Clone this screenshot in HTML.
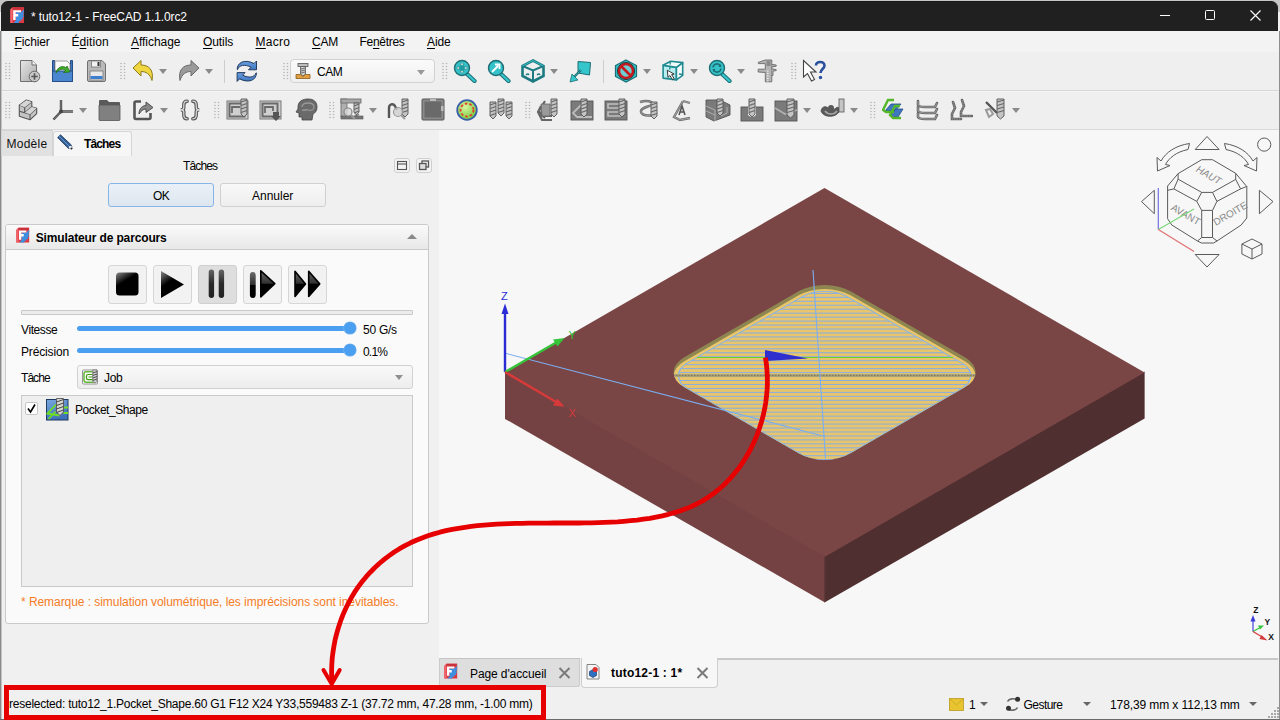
<!DOCTYPE html>
<html><head><meta charset="utf-8">
<style>
*{margin:0;padding:0;box-sizing:border-box}
html,body{width:1280px;height:720px;overflow:hidden;background:#f0f0f0;font-family:"Liberation Sans",sans-serif;font-size:12px;color:#000}
.a{position:absolute}
.t{position:absolute;white-space:nowrap;line-height:1}
#title{left:1px;top:1px;width:1277px;height:30px;background:#202020;border-top:1px solid #191919;border-radius:7px 7px 0 0}
#menu{left:0;top:31px;width:1280px;height:21px;background:#f3f3f3}
#tb{left:0;top:52px;width:1280px;height:78px;background:#efefef}
.grip{position:absolute;width:6px;height:17px;background-image:radial-gradient(circle,#a8a8a8 0.8px,transparent 1px);background-size:3px 4px}
.dd{position:absolute;width:0;height:0;border-left:4.5px solid transparent;border-right:4.5px solid transparent;border-top:5px solid #8a8a8a}
.ul{text-decoration:underline;text-underline-offset:2px}
</style></head><body>
<!-- window frame -->
<div class="a" style="left:0;top:0;width:1280px;height:12px;background:#c6c6c6"></div>
<div class="a" id="title"></div>
<div class="a" id="menu"></div>
<div class="a" id="tb"></div>
<div class="a" style="left:0;top:90px;width:1280px;height:1px;background:#d6d6d6"></div><div class="a" style="left:0;top:91px;width:1280px;height:1px;background:#f4f4f4"></div>
<div class="a" style="left:0;top:129px;width:1280px;height:1px;background:#d9d9d9"></div>
<div class="a" style="left:0;top:31px;width:1px;height:689px;background:#8a8a8a"></div><div class="a" style="left:1px;top:31px;width:1px;height:689px;background:#c4c4c4"></div>


<!-- title content -->
<svg class="a" style="left:10px;top:7px" width="17" height="17" viewBox="0 0 17 17">
<path d="M0.3 2.6 L2.6 0.3 H14 V16 H0.3 Z" fill="#dc3a42"/>
<path d="M0.3 2.6 L2.6 0.3 V16 H0.3 Z" fill="#f0646a"/>
<path d="M2.6 0.3 H14 L12 2.6 H2.6 Z" fill="#c8323a"/>
<path d="M14 2.4 V5 L13.2 5.6 L14 7 L13 8 L14 9.6 L12.6 10.4 L13 12 L11.2 12.4 L10.6 14 L9.2 14 L8.6 16 H3.8 L6 13 V5.3 H11 Z" fill="#3f8fe0"/>
<path d="M3.2 3.2 H11 V5.3 H5.6 V7 H8.2 V9.6 H5.6 V13 H3.2 Z" fill="#fff"/>
</svg>
<div class="t" style="left:31px;top:10.7px;font-size:12px;color:#fff;letter-spacing:-0.12px">* tuto12-1 - FreeCAD 1.1.0rc2</div>
<div class="a" style="left:1160px;top:15px;width:10px;height:1px;background:#fff"></div>
<div class="a" style="left:1205px;top:10px;width:10px;height:10px;border:1px solid #fff;border-radius:1.5px"></div>
<svg class="a" style="left:1250px;top:10px" width="11" height="11" viewBox="0 0 11 11"><path d="M0.5 0.5 L10.5 10.5 M10.5 0.5 L0.5 10.5" stroke="#fff" stroke-width="1.1"/></svg>
<!-- menu -->
<div class="t" style="left:14.5px;top:36px;font-size:12px;letter-spacing:-0.117px"><span class="ul">F</span>ichier</div>
<div class="t" style="left:71.5px;top:36px;font-size:12px;letter-spacing:0.067px">É<span class="ul">d</span>ition</div>
<div class="t" style="left:131px;top:36px;font-size:12px;letter-spacing:-0.037px"><span class="ul">A</span>ffichage</div>
<div class="t" style="left:203px;top:36px;font-size:12px;letter-spacing:-0.08px"><span class="ul">O</span>utils</div>
<div class="t" style="left:255.5px;top:36px;font-size:12px;letter-spacing:0.25px"><span class="ul">M</span>acro</div>
<div class="t" style="left:312px;top:36px;font-size:12px;letter-spacing:-0.25px"><span class="ul">C</span>AM</div>
<div class="t" style="left:359.5px;top:36px;font-size:12px;letter-spacing:-0.286px">Fe<span class="ul">n</span>êtres</div>
<div class="t" style="left:427px;top:36px;font-size:12px;letter-spacing:-0.1px"><span class="ul">A</span>ide</div>


<!-- toolbar row 1 -->
<svg class="a" style="left:5.0px;top:62.0px" width="6" height="18" fill="#b4b4b4"><rect x="0.30000000000000004" y="0.9" width="1.4" height="1.2"/><rect x="3.8" y="0.9" width="1.4" height="1.2"/><rect x="0.30000000000000004" y="3.9" width="1.4" height="1.2"/><rect x="3.8" y="3.9" width="1.4" height="1.2"/><rect x="0.30000000000000004" y="6.9" width="1.4" height="1.2"/><rect x="3.8" y="6.9" width="1.4" height="1.2"/><rect x="0.30000000000000004" y="9.9" width="1.4" height="1.2"/><rect x="3.8" y="9.9" width="1.4" height="1.2"/><rect x="0.30000000000000004" y="12.9" width="1.4" height="1.2"/><rect x="3.8" y="12.9" width="1.4" height="1.2"/><rect x="0.30000000000000004" y="15.9" width="1.4" height="1.2"/><rect x="3.8" y="15.9" width="1.4" height="1.2"/></svg>
<svg class="a" style="left:19px;top:59px" width="22" height="24" viewBox="0 0 22 24">
<defs><linearGradient id="gpg" x1="0" y1="0" x2="1" y2="1"><stop offset="0" stop-color="#e6e6e6"/><stop offset="1" stop-color="#a9a9a9"/></linearGradient></defs>
<path d="M1.5 1.5 H13 L17.5 6 V22.5 H1.5 Z" fill="url(#gpg)" stroke="#6f6f6f"/>
<path d="M13 1.5 V6 H17.5" fill="#f4f4f4" stroke="#6f6f6f"/>
<circle cx="15.5" cy="17.5" r="5.3" fill="#c8c8c8" stroke="#6a6a6a"/>
<path d="M15.5 14.3 V20.7 M12.3 17.5 H18.7" stroke="#555" stroke-width="1.6"/>
</svg>
<svg class="a" style="left:51px;top:59px" width="23" height="24" viewBox="0 0 23 24">
<path d="M1.5 1.5 H3.5 V11 H19.5 V1.5 H21.5 V22.5 H1.5 Z" fill="#3e76c0" stroke="#234e86"/>
<path d="M4 2 H16 L19 5 V13 H4 Z" fill="#fafafa" stroke="#888" stroke-width="0.8"/>
<path d="M1.5 12 H21.5 V22.5 H1.5 Z" fill="#4a86cf" stroke="#234e86"/>
<path d="M5 14 C6 8 12 6 15 9 L16 7 L19 13 L12.5 13.5 L14.5 11.5 C12 9.5 8 10 5 14 Z" fill="#3fae2a" stroke="#256d18" stroke-width="0.8"/>
</svg>
<svg class="a" style="left:86px;top:59px" width="21" height="24" viewBox="0 0 21 24">
<path d="M1.5 3 Q1.5 1.5 3 1.5 H16 L19.5 5 V21 Q19.5 22.5 18 22.5 H3 Q1.5 22.5 1.5 21 Z" fill="#b9b9b9" stroke="#707070"/>
<rect x="5.5" y="2" width="9" height="6" fill="#f2f2f2" stroke="#777" stroke-width="0.8"/>
<rect x="11.5" y="3" width="2" height="4" fill="#333"/>
<rect x="4" y="12" width="13" height="9" fill="#e8e8e8" stroke="#777" stroke-width="0.8"/>
<rect x="4.5" y="17" width="12" height="3" fill="#3f7fd0"/>
</svg>
<svg class="a" style="left:120.0px;top:62.0px" width="6" height="18" fill="#b4b4b4"><rect x="0.30000000000000004" y="0.9" width="1.4" height="1.2"/><rect x="3.8" y="0.9" width="1.4" height="1.2"/><rect x="0.30000000000000004" y="3.9" width="1.4" height="1.2"/><rect x="3.8" y="3.9" width="1.4" height="1.2"/><rect x="0.30000000000000004" y="6.9" width="1.4" height="1.2"/><rect x="3.8" y="6.9" width="1.4" height="1.2"/><rect x="0.30000000000000004" y="9.9" width="1.4" height="1.2"/><rect x="3.8" y="9.9" width="1.4" height="1.2"/><rect x="0.30000000000000004" y="12.9" width="1.4" height="1.2"/><rect x="3.8" y="12.9" width="1.4" height="1.2"/><rect x="0.30000000000000004" y="15.9" width="1.4" height="1.2"/><rect x="3.8" y="15.9" width="1.4" height="1.2"/></svg>
<svg class="a" style="left:132px;top:59px" width="23" height="23" viewBox="0 0 23 23">
<path d="M1 9 L9 1.5 L9 6 C17 6 22 11 20 21.5 C18 15 14 12.5 9 12.5 L9 17 Z" fill="#f0d640" stroke="#8a7a1a" stroke-width="1"/>
</svg>
<div class="dd" style="left:159px;top:69px"></div>
<svg class="a" style="left:177px;top:59px" width="23" height="23" viewBox="0 0 23 23">
<path d="M22 9 L14 1.5 L14 6 C6 6 1 11 3 21.5 C5 15 9 12.5 14 12.5 L14 17 Z" fill="#9a9a9a" stroke="#6a6a6a" stroke-width="1"/>
</svg>
<div class="dd" style="left:205px;top:69px"></div>
<div class="a" style="left:224px;top:60px;width:1px;height:23px;background:#cdcdcd"></div>
<svg class="a" style="left:228px;top:54px" width="36" height="34" viewBox="0 0 36 34">
<defs><linearGradient id="grf" x1="0" y1="0" x2="0" y2="1"><stop offset="0" stop-color="#6a9ee0"/><stop offset="1" stop-color="#3f78c0"/></linearGradient></defs>
<path d="M9.2 15.5 C9 9 16 4.5 26 9.5 L28.5 7 V15.8 H20.5 L23 13.3 C17 10 11 11 9.6 15.5 Z" fill="url(#grf)" stroke="#1a3050" stroke-width="0.9" stroke-linejoin="round"/>
<path d="M28.4 18.9 C28.6 25.4 21.6 29.9 11.6 24.9 L9.1 27.4 V18.6 H17.1 L14.6 21.1 C20.6 24.4 26.6 23.4 28 18.9 Z" fill="url(#grf)" stroke="#1a3050" stroke-width="0.9" stroke-linejoin="round"/>
</svg>
<svg class="a" style="left:283.0px;top:62.0px" width="6" height="18" fill="#b4b4b4"><rect x="0.30000000000000004" y="0.9" width="1.4" height="1.2"/><rect x="3.8" y="0.9" width="1.4" height="1.2"/><rect x="0.30000000000000004" y="3.9" width="1.4" height="1.2"/><rect x="3.8" y="3.9" width="1.4" height="1.2"/><rect x="0.30000000000000004" y="6.9" width="1.4" height="1.2"/><rect x="3.8" y="6.9" width="1.4" height="1.2"/><rect x="0.30000000000000004" y="9.9" width="1.4" height="1.2"/><rect x="3.8" y="9.9" width="1.4" height="1.2"/><rect x="0.30000000000000004" y="12.9" width="1.4" height="1.2"/><rect x="3.8" y="12.9" width="1.4" height="1.2"/><rect x="0.30000000000000004" y="15.9" width="1.4" height="1.2"/><rect x="3.8" y="15.9" width="1.4" height="1.2"/></svg>
<div class="a" style="left:290px;top:59px;width:145px;height:24px;border:1px solid #d2d2d2;border-radius:4px;background:linear-gradient(#fbfbfb,#f0f0f0)"></div>
<svg class="a" style="left:295px;top:63px" width="16" height="16" viewBox="0 0 16 16">
<rect x="3" y="0.5" width="10" height="3" fill="#bdbdbd" stroke="#555" stroke-width="0.8"/>
<path d="M5.5 3.5 H10.5 V11 L8 13 L5.5 11 Z" fill="#d0d0d0" stroke="#555" stroke-width="0.8"/>
<path d="M6 6 L10 5 M6 8 L10 7 M6 10 L10 9" stroke="#555" stroke-width="0.8"/>
<path d="M1 11.5 H5.5 L8 13.5 L10.5 11.5 H15 V15.5 H1 Z" fill="#e0a040" stroke="#8a5a20" stroke-width="0.8"/>
</svg>
<div class="t" style="left:317px;top:65.7px;font-size:12px;letter-spacing:-0.45px">CAM</div>
<div class="dd" style="left:417px;top:70px;border-top-color:#999"></div>
<svg class="a" style="left:442.0px;top:62.0px" width="6" height="18" fill="#b4b4b4"><rect x="0.30000000000000004" y="0.9" width="1.4" height="1.2"/><rect x="3.8" y="0.9" width="1.4" height="1.2"/><rect x="0.30000000000000004" y="3.9" width="1.4" height="1.2"/><rect x="3.8" y="3.9" width="1.4" height="1.2"/><rect x="0.30000000000000004" y="6.9" width="1.4" height="1.2"/><rect x="3.8" y="6.9" width="1.4" height="1.2"/><rect x="0.30000000000000004" y="9.9" width="1.4" height="1.2"/><rect x="3.8" y="9.9" width="1.4" height="1.2"/><rect x="0.30000000000000004" y="12.9" width="1.4" height="1.2"/><rect x="3.8" y="12.9" width="1.4" height="1.2"/><rect x="0.30000000000000004" y="15.9" width="1.4" height="1.2"/><rect x="3.8" y="15.9" width="1.4" height="1.2"/></svg>


<!-- toolbar row 1 right -->
<svg class="a" style="left:453px;top:59px" width="24" height="24" viewBox="0 0 24 24">
<path d="M13 14 L21.5 22" stroke="#1c6e74" stroke-width="4.2" stroke-linecap="round"/>
<path d="M13 14 L21.5 22" stroke="#35c6cc" stroke-width="2.2" stroke-linecap="round"/>
<circle cx="9" cy="9" r="7.5" fill="#35c2c8" stroke="#1c6e74" stroke-width="1.4"/>
<path d="M9 3.5 L11 6 H7 Z M9 14.5 L11 12 H7 Z M3.5 9 L6 7 V11 Z M14.5 9 L12 7 V11 Z" fill="#fff" stroke="#1c6e74" stroke-width="0.6"/>
<rect x="7" y="7" width="4" height="4" fill="#1f9aa0"/>
</svg>
<svg class="a" style="left:487px;top:59px" width="24" height="24" viewBox="0 0 24 24">
<path d="M13 14 L21.5 22" stroke="#1c6e74" stroke-width="4.2" stroke-linecap="round"/>
<path d="M13 14 L21.5 22" stroke="#35c6cc" stroke-width="2.2" stroke-linecap="round"/>
<circle cx="9" cy="9" r="7.5" fill="#35c2c8" stroke="#1c6e74" stroke-width="1.4"/>
<path d="M5 13 L11 7 M8 5.5 H12.5 V10" fill="none" stroke="#fff" stroke-width="1.8"/>
</svg>
<svg class="a" style="left:521px;top:59px" width="24" height="24" viewBox="0 0 24 24">
<path d="M12 1.5 L22.5 7 V17 L12 22.5 L1.5 17 V7 Z" fill="none" stroke="#1c7a80" stroke-width="2.6"/>
<path d="M1.5 7 L12 11.5 L22.5 7 M12 11.5 V22.5" fill="none" stroke="#1c7a80" stroke-width="2"/>
<path d="M1.5 7 L12 1.5 L22.5 7" fill="none" stroke="#35c2c8" stroke-width="1"/>
<path d="M5 16 q2 -2 3 0 M16 16 q2 -2 3 0" fill="none" stroke="#1c7a80" stroke-width="1.3"/>
</svg>
<div class="dd" style="left:550px;top:69px"></div>
<svg class="a" style="left:569px;top:60px" width="23" height="23" viewBox="0 0 23 23">
<path d="M9 1.5 L21.5 2.5 L20.5 15 L9 13 Z" fill="#35c6cc" stroke="#1c6e74" stroke-width="1"/>
<path d="M12 10 L4 18" stroke="#1c6e74" stroke-width="2.4"/>
<path d="M12 10 L4 18" stroke="#35c6cc" stroke-width="1" stroke-dasharray="2 1"/>
<path d="M1 22 L3 14 L9 20 Z" fill="#35c6cc" stroke="#1c6e74" stroke-width="0.8"/>
</svg>
<div class="a" style="left:603px;top:60px;width:1px;height:23px;background:#cdcdcd"></div>
<svg class="a" style="left:614px;top:59px" width="24" height="24" viewBox="0 0 24 24">
<path d="M12 1 L22.5 6.5 V17.5 L12 23 L1.5 17.5 V6.5 Z" fill="#35c2c8" stroke="#1c6e74" stroke-width="1.2"/>
<circle cx="12" cy="12" r="7" fill="#f0f0f0" fill-opacity="0.3" stroke="#c8181e" stroke-width="2.6"/>
<path d="M7 7 L17 17" stroke="#c8181e" stroke-width="2.6"/>
<circle cx="12" cy="12" r="8.6" fill="none" stroke="#222" stroke-width="0.8"/>
</svg>
<div class="dd" style="left:643px;top:69px"></div>
<svg class="a" style="left:656px;top:55px" width="34" height="32" viewBox="0 0 34 32">
<path d="M7.1 10.2 L20.4 12.4 L20.4 24.9 L7.1 23.1 Z" fill="#b8eef0" stroke="#1f8a90" stroke-width="1.6" stroke-linejoin="round"/>
<path d="M20.4 12.4 L26.7 7.6 L26.7 20.4 L20.4 24.9 Z" fill="#f4fbfb" stroke="#1f8a90" stroke-width="1.6" stroke-linejoin="round"/>
<path d="M7.1 10.2 L14.7 6.2 L26.7 7.6 L20.4 12.4 Z" fill="#f4fbfb" stroke="#1f8a90" stroke-width="1.6" stroke-linejoin="round"/>
<path d="M14.2 6.5 V9.5 M13.8 11 V14.5 M26.3 19.5 L23 19" stroke="#1f8a90" stroke-width="1.3"/>
<path d="M11.3 15.2 L12 22.4 L13.9 20.6 L16.6 24.6 L18.2 23.6 L15.6 19.6 L18.2 19.1 Z" fill="#fafafa" stroke="#222" stroke-width="0.9" stroke-linejoin="round"/>
</svg>
<div class="dd" style="left:690px;top:69px"></div>
<svg class="a" style="left:708px;top:59px" width="24" height="24" viewBox="0 0 24 24">
<path d="M13 14 L21.5 22" stroke="#1c6e74" stroke-width="4.2" stroke-linecap="round"/>
<path d="M13 14 L21.5 22" stroke="#35c6cc" stroke-width="2.2" stroke-linecap="round"/>
<circle cx="9" cy="9" r="7.5" fill="#35c2c8" stroke="#1c6e74" stroke-width="1.4"/>
<path d="M5 8.5 A4 4 0 0 1 12.5 7 M13 9.5 A4 4 0 0 1 5.5 11" fill="none" stroke="#1c6e74" stroke-width="1.5"/>
<path d="M12.5 5 L13.5 8 L10.5 8 Z M5.5 13 L4.5 10 L7.5 10 Z" fill="#1c6e74"/>
</svg>
<div class="dd" style="left:737px;top:69px"></div>
<svg class="a" style="left:756px;top:58px" width="22" height="26" viewBox="0 0 22 26">
<path d="M9.3 2 H15.8 V23.8 H9.3 V14.5 L2.2 14 V11.2 H9.3 V5.6 H2.4 L2.2 4.4 L9.3 2 Z" fill="#b4b4b4" stroke="#6a6a6a" stroke-width="0.9" stroke-linejoin="round"/>
<path d="M15.8 6.4 L20.2 7 V8.2 L15.8 9 M15.8 10.8 L20.2 11.6 V12.6 L17 13 V17.5 H15.8" fill="#b4b4b4" stroke="#6a6a6a" stroke-width="0.9"/>
<path d="M11 13 H12.5 M11 15.5 H12.5 M11 18 H12.5 M11 20.5 H12.5 M11 23 H12.5" stroke="#f0f0f0" stroke-width="1"/>
<rect x="10.5" y="3" width="4" height="5" fill="#8a8a8a"/>
</svg>
<svg class="a" style="left:791.0px;top:62.0px" width="6" height="18" fill="#b4b4b4"><rect x="0.30000000000000004" y="0.9" width="1.4" height="1.2"/><rect x="3.8" y="0.9" width="1.4" height="1.2"/><rect x="0.30000000000000004" y="3.9" width="1.4" height="1.2"/><rect x="3.8" y="3.9" width="1.4" height="1.2"/><rect x="0.30000000000000004" y="6.9" width="1.4" height="1.2"/><rect x="3.8" y="6.9" width="1.4" height="1.2"/><rect x="0.30000000000000004" y="9.9" width="1.4" height="1.2"/><rect x="3.8" y="9.9" width="1.4" height="1.2"/><rect x="0.30000000000000004" y="12.9" width="1.4" height="1.2"/><rect x="3.8" y="12.9" width="1.4" height="1.2"/><rect x="0.30000000000000004" y="15.9" width="1.4" height="1.2"/><rect x="3.8" y="15.9" width="1.4" height="1.2"/></svg>
<svg class="a" style="left:802px;top:59px" width="25" height="24" viewBox="0 0 25 24">
<path d="M1.5 1.5 L1.5 18 L5.5 14.5 L9.5 22 L12.5 20.5 L8.5 13 L14 13 Z" fill="#fff" stroke="#444" stroke-width="1.1"/>
<path d="M14 6.5 C14 2 22.5 1.5 22.5 6.5 C22.5 10 18.5 10 18.5 14" fill="none" stroke="#2a4f9c" stroke-width="2.6"/>
<circle cx="18.5" cy="18.5" r="1.7" fill="#2a4f9c"/>
</svg>


<!-- toolbar row 2 -->
<svg class="a" style="left:5.0px;top:101.0px" width="6" height="18" fill="#b4b4b4"><rect x="0.30000000000000004" y="0.9" width="1.4" height="1.2"/><rect x="3.8" y="0.9" width="1.4" height="1.2"/><rect x="0.30000000000000004" y="3.9" width="1.4" height="1.2"/><rect x="3.8" y="3.9" width="1.4" height="1.2"/><rect x="0.30000000000000004" y="6.9" width="1.4" height="1.2"/><rect x="3.8" y="6.9" width="1.4" height="1.2"/><rect x="0.30000000000000004" y="9.9" width="1.4" height="1.2"/><rect x="3.8" y="9.9" width="1.4" height="1.2"/><rect x="0.30000000000000004" y="12.9" width="1.4" height="1.2"/><rect x="3.8" y="12.9" width="1.4" height="1.2"/><rect x="0.30000000000000004" y="15.9" width="1.4" height="1.2"/><rect x="3.8" y="15.9" width="1.4" height="1.2"/></svg>
<svg class="a" style="left:14px;top:94px" width="30" height="32" viewBox="0 0 30 32">
<path d="M5.3 11.1 L12.4 6 L17.8 7.8 V12.9 L22.7 14.2 V19.6 L16 25.8 L5.3 22.2 Z" fill="#c4c4c4" stroke="#555" stroke-width="1.1" stroke-linejoin="round"/>
<path d="M5.3 11.1 L10.7 13.3 L17.8 7.8 M10.7 13.3 V18.7 M5.3 17.3 L10.7 18.7 L16 20.4 L22.7 14.2 M16 20.4 V25.8 M10.7 18.7 L17.8 12.9" fill="none" stroke="#555" stroke-width="1.1"/>
<path d="M5.5 11.2 L12.4 6.2 L17.6 8 L10.7 13.2 Z M10.9 18.6 L17.8 13 L22.5 14.3 L16 20.2 Z" fill="#d6d6d6"/>
</svg>
<svg class="a" style="left:52px;top:99px" width="22" height="22" viewBox="0 0 22 22">
<path d="M9 1 V12.5 M9 12.5 H21 M9 12.5 L1.5 20.5" stroke="#4a4a4a" stroke-width="2.4"/>
<path d="M9 1 V12.5 M9 12.5 H21 M9 12.5 L1.5 20.5" stroke="#8a8a8a" stroke-width="0.8"/>
<circle cx="9" cy="12.5" r="2" fill="#444"/>
</svg>
<div class="dd" style="left:79px;top:108px"></div>
<svg class="a" style="left:98px;top:99px" width="23" height="22" viewBox="0 0 23 22">
<path d="M1 2 Q1 1 2 1 H9 L11 3 H21 Q22 3 22 4 V21 H1 Z" fill="#5a5a5a"/>
<path d="M1 6 H22 V20.5 Q22 21.5 21 21.5 H2 Q1 21.5 1 20.5 Z" fill="#808080" stroke="#555" stroke-width="0.8"/>
</svg>
<svg class="a" style="left:133px;top:99px" width="21" height="22" viewBox="0 0 21 22">
<path d="M8 2.5 H3 Q1.5 2.5 1.5 4 V18.5 Q1.5 20 3 20 H16 Q17.5 20 17.5 18.5 V14" fill="none" stroke="#555" stroke-width="2.6"/>
<path d="M6 15 C6 9 10 6.5 13 6.5 V3 L20 8.5 L13 13.5 V10 C10 10 8 12 6 15 Z" fill="#888" stroke="#444" stroke-width="0.9"/>
</svg>
<div class="dd" style="left:160px;top:108px"></div>
<svg class="a" style="left:174px;top:94px" width="32" height="32" viewBox="0 0 32 32">
<path d="M13.2 7.2 Q9.8 7.2 9.8 11 V13.5 Q9.8 15.8 6.8 15.8 Q9.8 15.8 9.8 18 V21 Q9.8 24.8 13.2 24.8 M18.8 7.2 Q22.2 7.2 22.2 11 V13.5 Q22.2 15.8 25.2 15.8 Q22.2 15.8 22.2 18 V21 Q22.2 24.8 18.8 24.8" fill="none" stroke="#555" stroke-width="3.4" stroke-linecap="round"/>
<path d="M13.2 7.2 Q9.8 7.2 9.8 11 V13.5 Q9.8 15.8 6.8 15.8 Q9.8 15.8 9.8 18 V21 Q9.8 24.8 13.2 24.8 M18.8 7.2 Q22.2 7.2 22.2 11 V13.5 Q22.2 15.8 25.2 15.8 Q22.2 15.8 22.2 18 V21 Q22.2 24.8 18.8 24.8" fill="none" stroke="#dcdcdc" stroke-width="1.2" stroke-linecap="round"/>
</svg>
<svg class="a" style="left:214.0px;top:101.0px" width="6" height="18" fill="#b4b4b4"><rect x="0.30000000000000004" y="0.9" width="1.4" height="1.2"/><rect x="3.8" y="0.9" width="1.4" height="1.2"/><rect x="0.30000000000000004" y="3.9" width="1.4" height="1.2"/><rect x="3.8" y="3.9" width="1.4" height="1.2"/><rect x="0.30000000000000004" y="6.9" width="1.4" height="1.2"/><rect x="3.8" y="6.9" width="1.4" height="1.2"/><rect x="0.30000000000000004" y="9.9" width="1.4" height="1.2"/><rect x="3.8" y="9.9" width="1.4" height="1.2"/><rect x="0.30000000000000004" y="12.9" width="1.4" height="1.2"/><rect x="3.8" y="12.9" width="1.4" height="1.2"/><rect x="0.30000000000000004" y="15.9" width="1.4" height="1.2"/><rect x="3.8" y="15.9" width="1.4" height="1.2"/></svg>
<svg class="a" style="left:226px;top:98px" width="23" height="23" viewBox="0 0 23 23">
<rect x="1" y="3" width="21" height="18" fill="#cfcfcf" stroke="#777" stroke-width="1"/>
<rect x="3.5" y="5.5" width="15" height="13" fill="none" stroke="#6a6a6a" stroke-width="2"/>
<path d="M6 15 V9 H14" fill="none" stroke="#6a6a6a" stroke-width="1.8"/>
<path d="M15 1 H21 V16 L18.0 19 L15 16 Z" fill="#c4c4c4" stroke="#555" stroke-width="0.9"/><path d="M15 4.0 L21 2.0" stroke="#666" stroke-width="1.1"/><path d="M15 7.5 L21 5.5" stroke="#666" stroke-width="1.1"/><path d="M15 11.0 L21 9.0" stroke="#666" stroke-width="1.1"/><path d="M15 14.5 L21 12.5" stroke="#666" stroke-width="1.1"/>
</svg>
<svg class="a" style="left:259px;top:98px" width="24" height="23" viewBox="0 0 24 23">
<rect x="1" y="3" width="21" height="18" fill="#cfcfcf" stroke="#777" stroke-width="1"/>
<rect x="3.5" y="5.5" width="15" height="13" fill="none" stroke="#6a6a6a" stroke-width="2"/>
<path d="M6 15 V9 H14 V13" fill="none" stroke="#6a6a6a" stroke-width="1.8"/>
<path d="M14 14 H20 V18 H22 L17 23 L12 18 H14 Z" fill="#555"/>
</svg>
<svg class="a" style="left:294px;top:98px" width="24" height="23" viewBox="0 0 24 23">
<path d="M4 9 C4 3 9 1 14 1 C20 1 23 4 23 9 C23 13 21 15 19 16 L18 22 H8 L8 19 H5 L5 15 L2 14 L4 11 Z" fill="#6a6a6a" stroke="#444" stroke-width="0.8"/>
<path d="M8 9 C8 6 11 5 14 5 C18 5 20 6.5 20 9 C20 12 17 13 14 12 C12 11 10 13 8 12" fill="none" stroke="#999" stroke-width="1.3"/>
</svg>
<svg class="a" style="left:329.0px;top:101.0px" width="6" height="18" fill="#b4b4b4"><rect x="0.30000000000000004" y="0.9" width="1.4" height="1.2"/><rect x="3.8" y="0.9" width="1.4" height="1.2"/><rect x="0.30000000000000004" y="3.9" width="1.4" height="1.2"/><rect x="3.8" y="3.9" width="1.4" height="1.2"/><rect x="0.30000000000000004" y="6.9" width="1.4" height="1.2"/><rect x="3.8" y="6.9" width="1.4" height="1.2"/><rect x="0.30000000000000004" y="9.9" width="1.4" height="1.2"/><rect x="3.8" y="9.9" width="1.4" height="1.2"/><rect x="0.30000000000000004" y="12.9" width="1.4" height="1.2"/><rect x="3.8" y="12.9" width="1.4" height="1.2"/><rect x="0.30000000000000004" y="15.9" width="1.4" height="1.2"/><rect x="3.8" y="15.9" width="1.4" height="1.2"/></svg>
<svg class="a" style="left:340px;top:98px" width="24" height="23" viewBox="0 0 24 23">
<rect x="1" y="1" width="6" height="18" fill="#b0b0b0" stroke="#666" stroke-width="0.8"/>
<rect x="1" y="1" width="20" height="4" fill="#a8a8a8" stroke="#666" stroke-width="0.8"/>
<path d="M14 5 H19 V14 L16.5 17 L14 14 Z" fill="#c4c4c4" stroke="#555" stroke-width="0.9"/><path d="M14 8.0 L19 6.0" stroke="#666" stroke-width="1.1"/><path d="M14 11.5 L19 9.5" stroke="#666" stroke-width="1.1"/><path d="M14 15.0 L19 13.0" stroke="#666" stroke-width="1.1"/><path d="M14 18.5 L19 16.5" stroke="#666" stroke-width="1.1"/>
<rect x="1" y="18" width="22" height="3" fill="#777" stroke="#555" stroke-width="0.6"/>
<circle cx="8" cy="14" r="4" fill="#d8d8d8" fill-opacity="0.8" stroke="#888" stroke-width="1.2"/>
<path d="M11 17 L15 21" stroke="#999" stroke-width="2"/>
</svg>
<div class="dd" style="left:369px;top:108px"></div>
<svg class="a" style="left:387px;top:98px" width="24" height="23" viewBox="0 0 24 23">
<path d="M2 20 V10 C2 6 6 5 8 8 L10 12" fill="none" stroke="#555" stroke-width="2.4"/>
<path d="M15 1 H21 V16 L18.0 19 L15 16 Z" fill="#c4c4c4" stroke="#555" stroke-width="0.9"/><path d="M15 4.0 L21 2.0" stroke="#666" stroke-width="1.1"/><path d="M15 7.5 L21 5.5" stroke="#666" stroke-width="1.1"/><path d="M15 11.0 L21 9.0" stroke="#666" stroke-width="1.1"/><path d="M15 14.5 L21 12.5" stroke="#666" stroke-width="1.1"/>
<circle cx="11" cy="14" r="4.5" fill="#d0d0d0" fill-opacity="0.8" stroke="#999" stroke-width="1.2"/>
<path d="M14 17 L18 21" stroke="#999" stroke-width="2"/>
</svg>
<svg class="a" style="left:421px;top:98px" width="24" height="23" viewBox="0 0 24 23">
<rect x="1" y="1" width="22" height="21" rx="1" fill="#8a8a8a" stroke="#555" stroke-width="1"/>
<rect x="3.5" y="3.5" width="17" height="16" fill="#6a6a6a"/>
<rect x="9" y="1" width="6" height="2" fill="#bbb"/><rect x="20" y="8" width="2.5" height="5" fill="#bbb"/>
</svg>
<svg class="a" style="left:456px;top:99px" width="22" height="22" viewBox="0 0 22 22">
<defs><radialGradient id="ggc" cx="0.4" cy="0.35" r="0.7"><stop offset="0" stop-color="#d8f5a0"/><stop offset="1" stop-color="#6ecb3a"/></radialGradient></defs>
<circle cx="11" cy="11" r="9.8" fill="url(#ggc)" stroke="#3a5fa8" stroke-width="1.8"/>
<circle cx="11" cy="11" r="6.5" fill="none" stroke="#e83a2a" stroke-width="1.8" stroke-dasharray="2.6 2"/>
</svg>
<svg class="a" style="left:489px;top:98px" width="24" height="24" viewBox="0 0 24 24">
<path d="M1 4 H7 V18 L4.0 21 L1 18 Z" fill="#c4c4c4" stroke="#555" stroke-width="0.9"/><path d="M1 7.0 L7 5.0" stroke="#666" stroke-width="1.1"/><path d="M1 10.5 L7 8.5" stroke="#666" stroke-width="1.1"/><path d="M1 14.0 L7 12.0" stroke="#666" stroke-width="1.1"/><path d="M1 17.5 L7 15.5" stroke="#666" stroke-width="1.1"/><path d="M9 1 H15 V15 L12.0 18 L9 15 Z" fill="#c4c4c4" stroke="#555" stroke-width="0.9"/><path d="M9 4.0 L15 2.0" stroke="#666" stroke-width="1.1"/><path d="M9 7.5 L15 5.5" stroke="#666" stroke-width="1.1"/><path d="M9 11.0 L15 9.0" stroke="#666" stroke-width="1.1"/><path d="M9 14.5 L15 12.5" stroke="#666" stroke-width="1.1"/><path d="M17 4 H23 V18 L20.0 21 L17 18 Z" fill="#c4c4c4" stroke="#555" stroke-width="0.9"/><path d="M17 7.0 L23 5.0" stroke="#666" stroke-width="1.1"/><path d="M17 10.5 L23 8.5" stroke="#666" stroke-width="1.1"/><path d="M17 14.0 L23 12.0" stroke="#666" stroke-width="1.1"/><path d="M17 17.5 L23 15.5" stroke="#666" stroke-width="1.1"/>
</svg>
<svg class="a" style="left:525.0px;top:101.0px" width="6" height="18" fill="#b4b4b4"><rect x="0.30000000000000004" y="0.9" width="1.4" height="1.2"/><rect x="3.8" y="0.9" width="1.4" height="1.2"/><rect x="0.30000000000000004" y="3.9" width="1.4" height="1.2"/><rect x="3.8" y="3.9" width="1.4" height="1.2"/><rect x="0.30000000000000004" y="6.9" width="1.4" height="1.2"/><rect x="3.8" y="6.9" width="1.4" height="1.2"/><rect x="0.30000000000000004" y="9.9" width="1.4" height="1.2"/><rect x="3.8" y="9.9" width="1.4" height="1.2"/><rect x="0.30000000000000004" y="12.9" width="1.4" height="1.2"/><rect x="3.8" y="12.9" width="1.4" height="1.2"/><rect x="0.30000000000000004" y="15.9" width="1.4" height="1.2"/><rect x="3.8" y="15.9" width="1.4" height="1.2"/></svg>
<svg class="a" style="left:536px;top:98px" width="24" height="24" viewBox="0 0 24 24">
<path d="M9 3 L3 13 L6 18 H16 M5 8 L2 14 L6 22 H16 M8 12 L4 16 L9 20" fill="none" stroke="#666" stroke-width="2.2"/>
<path d="M5 6 H14 V18 H6 Z" fill="#9a9a9a" stroke="#666" stroke-width="0.8"/>
<path d="M15 1 H21 V16 L18.0 19 L15 16 Z" fill="#c4c4c4" stroke="#555" stroke-width="0.9"/><path d="M15 4.0 L21 2.0" stroke="#666" stroke-width="1.1"/><path d="M15 7.5 L21 5.5" stroke="#666" stroke-width="1.1"/><path d="M15 11.0 L21 9.0" stroke="#666" stroke-width="1.1"/><path d="M15 14.5 L21 12.5" stroke="#666" stroke-width="1.1"/>
</svg>
<svg class="a" style="left:570px;top:98px" width="24" height="24" viewBox="0 0 24 24">
<rect x="1" y="3" width="22" height="19" fill="#7a7a7a" stroke="#555" stroke-width="0.9"/>
<path d="M13 5 L3 15 L7 19 H22" fill="none" stroke="#bbb" stroke-width="1.8"/>
<path d="M11 1 H17 V16 L14.0 19 L11 16 Z" fill="#c4c4c4" stroke="#555" stroke-width="0.9"/><path d="M11 4.0 L17 2.0" stroke="#666" stroke-width="1.1"/><path d="M11 7.5 L17 5.5" stroke="#666" stroke-width="1.1"/><path d="M11 11.0 L17 9.0" stroke="#666" stroke-width="1.1"/><path d="M11 14.5 L17 12.5" stroke="#666" stroke-width="1.1"/>
</svg>
<svg class="a" style="left:604px;top:98px" width="24" height="24" viewBox="0 0 24 24">
<rect x="1" y="3" width="22" height="19" fill="#7a7a7a" stroke="#555" stroke-width="0.9"/>
<path d="M16 6 H4 V10 H16 M16 14 H4 V18 H18" fill="none" stroke="#c0c0c0" stroke-width="1.6"/>
<path d="M15 1 H21 V16 L18.0 19 L15 16 Z" fill="#c4c4c4" stroke="#555" stroke-width="0.9"/><path d="M15 4.0 L21 2.0" stroke="#666" stroke-width="1.1"/><path d="M15 7.5 L21 5.5" stroke="#666" stroke-width="1.1"/><path d="M15 11.0 L21 9.0" stroke="#666" stroke-width="1.1"/><path d="M15 14.5 L21 12.5" stroke="#666" stroke-width="1.1"/>
</svg>
<svg class="a" style="left:638px;top:98px" width="24" height="24" viewBox="0 0 24 24">
<path d="M2 4 C8 2 16 3 14 7 C9 9 2 10 3 14 C4 18 12 18 18 17" fill="none" stroke="#666" stroke-width="2.4"/>
<path d="M2 4 C8 2 16 3 14 7 C9 9 2 10 3 14 C4 18 12 18 18 17" fill="none" stroke="#aaa" stroke-width="0.8"/>
<path d="M13 4 H19 V18 L16.0 21 L13 18 Z" fill="#c4c4c4" stroke="#555" stroke-width="0.9"/><path d="M13 7.0 L19 5.0" stroke="#666" stroke-width="1.1"/><path d="M13 10.5 L19 8.5" stroke="#666" stroke-width="1.1"/><path d="M13 14.0 L19 12.0" stroke="#666" stroke-width="1.1"/><path d="M13 17.5 L19 15.5" stroke="#666" stroke-width="1.1"/>
</svg>
<svg class="a" style="left:672px;top:99px" width="22" height="23" viewBox="0 0 22 23">
<path d="M11 2 L2 18 L8 21 L18 19 M11 2 L18 4" fill="none" stroke="#6a6a6a" stroke-width="2.3"/>
<path d="M11 2 L2 18 L8 21 L18 19 M11 2 L18 4" fill="none" stroke="#b0b0b0" stroke-width="0.8"/>
<path d="M7 16 L10 7 L13 16 M8 13 H12" fill="none" stroke="#555" stroke-width="1.6"/>
</svg>
<svg class="a" style="left:705px;top:98px" width="26" height="24" viewBox="0 0 26 24">
<path d="M1 2 H15 L25 7 V17 L9 23 L1 19 Z" fill="#7a7a7a" stroke="#555" stroke-width="0.9"/>
<path d="M1 8 L10 12 V23 M1 13 L10 17 M16 9 V18 L22 15 V9" fill="none" stroke="#b0b0b0" stroke-width="1"/>
<path d="M12 1 H18 V15 L15.0 18 L12 15 Z" fill="#c4c4c4" stroke="#555" stroke-width="0.9"/><path d="M12 4.0 L18 2.0" stroke="#666" stroke-width="1.1"/><path d="M12 7.5 L18 5.5" stroke="#666" stroke-width="1.1"/><path d="M12 11.0 L18 9.0" stroke="#666" stroke-width="1.1"/><path d="M12 14.5 L18 12.5" stroke="#666" stroke-width="1.1"/>
</svg>
<svg class="a" style="left:740px;top:98px" width="24" height="24" viewBox="0 0 24 24">
<rect x="1" y="9" width="22" height="14" fill="#7a7a7a" stroke="#555" stroke-width="0.9"/>
<path d="M8 9 V17 Q12 21 16 17 V9" fill="#efefef"/>
<path d="M9 1 H15 V16 L12.0 19 L9 16 Z" fill="#c4c4c4" stroke="#555" stroke-width="0.9"/><path d="M9 4.0 L15 2.0" stroke="#666" stroke-width="1.1"/><path d="M9 7.5 L15 5.5" stroke="#666" stroke-width="1.1"/><path d="M9 11.0 L15 9.0" stroke="#666" stroke-width="1.1"/><path d="M9 14.5 L15 12.5" stroke="#666" stroke-width="1.1"/>
</svg>
<svg class="a" style="left:774px;top:98px" width="24" height="24" viewBox="0 0 24 24">
<rect x="1" y="3" width="22" height="20" fill="#7a7a7a" stroke="#555" stroke-width="0.9"/>
<path d="M1 10 L11 16 L23 12" fill="none" stroke="#b0b0b0" stroke-width="1.6"/>
<path d="M13 1 H20 V17 L16.5 20 L13 17 Z" fill="#c4c4c4" stroke="#555" stroke-width="0.9"/><path d="M13 4.0 L20 2.0" stroke="#666" stroke-width="1.1"/><path d="M13 7.5 L20 5.5" stroke="#666" stroke-width="1.1"/><path d="M13 11.0 L20 9.0" stroke="#666" stroke-width="1.1"/><path d="M13 14.5 L20 12.5" stroke="#666" stroke-width="1.1"/>
</svg>
<div class="dd" style="left:803px;top:108px"></div>
<svg class="a" style="left:820px;top:98px" width="26" height="24" viewBox="0 0 26 24">
<path d="M1 13 C2 8 6 8 8 10 C10 12 14 12 16 10 C18 8 20 10 19 13 C18 19 4 21 1 13 Z" fill="#5a5a5a" stroke="#444" stroke-width="0.8"/>
<path d="M5 13 C8 17 14 17 17 13" fill="none" stroke="#aaa" stroke-width="1.4"/>
<circle cx="11" cy="10" r="3" fill="#5a5a5a"/>
<rect x="19" y="1" width="5" height="13" fill="#c4c4c4" stroke="#555" stroke-width="0.8"/>
</svg>
<div class="dd" style="left:850px;top:108px"></div>
<svg class="a" style="left:870.0px;top:101.0px" width="6" height="18" fill="#b4b4b4"><rect x="0.30000000000000004" y="0.9" width="1.4" height="1.2"/><rect x="3.8" y="0.9" width="1.4" height="1.2"/><rect x="0.30000000000000004" y="3.9" width="1.4" height="1.2"/><rect x="3.8" y="3.9" width="1.4" height="1.2"/><rect x="0.30000000000000004" y="6.9" width="1.4" height="1.2"/><rect x="3.8" y="6.9" width="1.4" height="1.2"/><rect x="0.30000000000000004" y="9.9" width="1.4" height="1.2"/><rect x="3.8" y="9.9" width="1.4" height="1.2"/><rect x="0.30000000000000004" y="12.9" width="1.4" height="1.2"/><rect x="3.8" y="12.9" width="1.4" height="1.2"/><rect x="0.30000000000000004" y="15.9" width="1.4" height="1.2"/><rect x="3.8" y="15.9" width="1.4" height="1.2"/></svg>
<svg class="a" style="left:882px;top:98px" width="23" height="24" viewBox="0 0 23 24">
<path d="M3 13 L9 6 H19 L13 13 Z" fill="#3f78c0" stroke="#234e86" stroke-width="0.8"/>
<path d="M8 18 L14 11 H21 L16 19 Z" fill="#3f78c0" stroke="#234e86" stroke-width="0.8"/>
<path d="M12 2 H6 L1 12 L4 14 H12 M18 8 H13 L8 17 L11 20 H19" fill="none" stroke="#55b82a" stroke-width="2.4"/>
</svg>
<svg class="a" style="left:915px;top:98px" width="24" height="24" viewBox="0 0 24 24">
<path d="M3 3 L3 7 Q4 9 10 9 H20 L22 5 M3 9 L3 13 Q4 15 10 15 H20 L22 11 M3 15 L3 19 Q4 21 10 21 H20 L22 17" fill="none" stroke="#666" stroke-width="2.6" stroke-linecap="round"/>
<path d="M3 3 L3 7 Q4 9 10 9 H20 L22 5 M3 9 L3 13 Q4 15 10 15 H20 L22 11 M3 15 L3 19 Q4 21 10 21 H20 L22 17" fill="none" stroke="#aaa" stroke-width="0.8"/>
</svg>
<svg class="a" style="left:950px;top:98px" width="23" height="24" viewBox="0 0 23 24">
<path d="M3 4 L5 10 L2 16 L2 21 H11 M12 2 L14 8 L11 14 L11 18 H22" fill="none" stroke="#666" stroke-width="2.6" stroke-linecap="round"/>
<path d="M3 4 L5 10 L2 16 L2 21 H11 M12 2 L14 8 L11 14 L11 18 H22" fill="none" stroke="#aaa" stroke-width="0.8" stroke-dasharray="1.5 1"/>
</svg>
<svg class="a" style="left:984px;top:98px" width="22" height="24" viewBox="0 0 22 24">
<path d="M2 4 L9 11 L13 15" fill="none" stroke="#555" stroke-width="2.4"/>
<path d="M2 12 L5 19 L9 16 L6 11 Z" fill="none" stroke="#9a9a9a" stroke-width="2"/>
<path d="M13 1 H20 V18 L16.5 21 L13 18 Z" fill="#c4c4c4" stroke="#555" stroke-width="0.9"/><path d="M13 4.0 L20 2.0" stroke="#666" stroke-width="1.1"/><path d="M13 7.5 L20 5.5" stroke="#666" stroke-width="1.1"/><path d="M13 11.0 L20 9.0" stroke="#666" stroke-width="1.1"/><path d="M13 14.5 L20 12.5" stroke="#666" stroke-width="1.1"/>
</svg>
<div class="dd" style="left:1012px;top:108px"></div>


<!-- left panel -->
<div class="a" style="left:1px;top:130px;width:52px;height:26px;background:#e1e1e1;border:1px solid #d3d3d3;border-bottom:none"></div>
<div class="t" style="left:6.5px;top:137.5px;font-size:12px;color:#111;letter-spacing:0.25px">Modèle</div>
<div class="a" style="left:53px;top:131px;width:79px;height:25px;background:#f6f6f6;border:1px solid #d6d6d6;border-bottom:none;border-radius:3px 3px 0 0"></div>
<svg class="a" style="left:57px;top:134px" width="16" height="16" viewBox="0 0 16 16">
<path d="M3.5 0.8 L14.5 11.2 L15 15 L11.2 14.3 L0.6 3.6 Z" fill="#2f5d93" stroke="#1e3a60" stroke-width="0.8"/>
<path d="M2 2.2 L13 13" stroke="#6f9cd0" stroke-width="1"/>
<path d="M11.8 12.2 L14.6 11.8 L15 15 L12 14.4 Z" fill="#e8e8e8"/>
<path d="M14 14 L15 15" stroke="#222" stroke-width="1.5"/>
</svg>
<div class="t" style="left:84px;top:137.5px;font-size:12px;font-weight:bold;letter-spacing:-0.86px">Tâches</div>
<div class="t" style="left:183px;top:159.8px;font-size:12px;letter-spacing:-0.86px">Tâches</div>
<svg class="a" style="left:394px;top:158px" width="16" height="15" viewBox="0 0 16 15">
<rect x="0.5" y="0.5" width="15" height="14" rx="2.5" fill="#f4f4f4" stroke="#cfcfcf"/>
<rect x="3.5" y="3.5" width="9" height="8" fill="none" stroke="#555" stroke-width="1.1"/>
<path d="M3.5 6 H12.5" stroke="#555" stroke-width="1.1"/>
</svg>
<svg class="a" style="left:416px;top:158px" width="16" height="15" viewBox="0 0 16 15">
<rect x="0.5" y="0.5" width="15" height="14" rx="2.5" fill="#f4f4f4" stroke="#cfcfcf"/>
<rect x="6" y="3" width="6.5" height="6" fill="none" stroke="#555" stroke-width="1.3"/>
<rect x="3.5" y="5.5" width="6.5" height="6" fill="#ddd" stroke="#555" stroke-width="1.3"/>
</svg>
<div class="a" style="left:108px;top:183px;width:106px;height:24px;border:1px solid #86b6e8;border-radius:3px;background:linear-gradient(#eaf0f7,#dde6f0)"></div>
<div class="t" style="left:153px;top:189.8px;font-size:12px;letter-spacing:-0.5px">OK</div>
<div class="a" style="left:220px;top:183px;width:106px;height:24px;border:1px solid #d0d0d0;border-radius:3px;background:linear-gradient(#f8f8f8,#eeeeee)"></div>
<div class="t" style="left:252px;top:189.8px;font-size:12px">Annuler</div>

<!-- task box -->
<div class="a" style="left:5px;top:224px;width:424px;height:400px;background:#fafafa;border:1px solid #cacaca;border-radius:3px"></div>
<div class="a" style="left:6px;top:225px;width:422px;height:25px;background:linear-gradient(#fafafa,#e8e8e8);border-bottom:1px solid #c9c9c9;border-radius:2px 2px 0 0"></div>
<svg class="a" style="left:16px;top:227px" width="16" height="17" viewBox="0 0 17 17">
<path d="M0.3 2.6 L2.6 0.3 H14 V16 H0.3 Z" fill="#dc3a42"/>
<path d="M0.3 2.6 L2.6 0.3 V16 H0.3 Z" fill="#f0646a"/>
<path d="M2.6 0.3 H14 L12 2.6 H2.6 Z" fill="#c8323a"/>
<path d="M14 2.4 V5 L13.2 5.6 L14 7 L13 8 L14 9.6 L12.6 10.4 L13 12 L11.2 12.4 L10.6 14 L9.2 14 L8.6 16 H3.8 L6 13 V5.3 H11 Z" fill="#3f8fe0"/>
<path d="M3.2 3.2 H11 V5.3 H5.6 V7 H8.2 V9.6 H5.6 V13 H3.2 Z" fill="#fff"/>
</svg>
<div class="t" style="left:35.7px;top:231.8px;font-size:12px;font-weight:bold;letter-spacing:-0.14px">Simulateur de parcours</div>
<div class="a" style="left:407px;top:234px;width:0;height:0;border-left:5px solid transparent;border-right:5px solid transparent;border-bottom:5px solid #8a8a8a"></div>

<div class="a" style="left:108px;top:265px;width:39px;height:39px;border:1px solid #d6d6d6;border-radius:3px;background:#f2f2f2"></div>
<div class="a" style="left:153px;top:265px;width:39px;height:39px;border:1px solid #d6d6d6;border-radius:3px;background:#f2f2f2"></div>
<div class="a" style="left:198px;top:265px;width:39px;height:39px;border:1px solid #cfcfcf;border-radius:3px;background:#dedede"></div>
<div class="a" style="left:243px;top:265px;width:39px;height:39px;border:1px solid #d6d6d6;border-radius:3px;background:#f2f2f2"></div>
<div class="a" style="left:288px;top:265px;width:39px;height:39px;border:1px solid #d6d6d6;border-radius:3px;background:#f2f2f2"></div>
<svg class="a" style="left:108px;top:265px" width="220" height="39" viewBox="0 0 220 39">
<defs>
<linearGradient id="gbk" x1="0" y1="0" x2="0.6" y2="1"><stop offset="0" stop-color="#8a8a8a"/><stop offset="0.45" stop-color="#000"/></linearGradient>
<linearGradient id="gtri" x1="0" y1="0" x2="0" y2="1"><stop offset="0" stop-color="#6a6a6a"/><stop offset="0.48" stop-color="#303030"/><stop offset="0.5" stop-color="#000"/><stop offset="1" stop-color="#000"/></linearGradient>
<linearGradient id="gbar" x1="0" y1="0" x2="0" y2="1"><stop offset="0" stop-color="#666"/><stop offset="0.5" stop-color="#2a2a2a"/><stop offset="1" stop-color="#222"/></linearGradient>
</defs>
<rect x="8" y="7.5" width="22.5" height="23" rx="3.5" fill="url(#gbk)"/>
<path d="M53 6 L53 33 L76 19.5 Z" fill="url(#gbk)"/>
<rect x="100.7" y="4.4" width="5.4" height="28.5" rx="2.7" fill="url(#gbar)"/>
<rect x="110.7" y="4.4" width="5.4" height="28.5" rx="2.7" fill="url(#gbar)"/>
<rect x="141.9" y="7" width="5.8" height="26" rx="2.9" fill="url(#gtri)"/>
<path d="M152.8 5.8 L152.8 32 L166.8 18.6 Z" fill="url(#gtri)" stroke="#000" stroke-width="1.6" stroke-linejoin="round"/>
<path d="M187 6.3 L187 31.4 L197.5 18.9 Z" fill="url(#gtri)" stroke="#000" stroke-width="1.6" stroke-linejoin="round"/>
<path d="M200.7 6.3 L200.7 31.4 L211.7 18.9 Z" fill="url(#gtri)" stroke="#000" stroke-width="1.6" stroke-linejoin="round"/>
</svg>
<div class="a" style="left:21px;top:310px;width:392px;height:5px;border:1px solid #c9c9c9;background:#ececec;border-radius:1px"></div>

<div class="t" style="left:21px;top:323.6px;font-size:12px;letter-spacing:-0.4px">Vitesse</div>
<div class="a" style="left:77px;top:325.5px;width:274px;height:5px;background:#4b9ff0;border-radius:2.5px"></div>
<div class="a" style="left:344px;top:322px;width:12px;height:12px;background:#4b9ff0;border-radius:50%;box-shadow:0 0 0 0.6px #7fb7ee"></div>
<div class="t" style="left:363px;top:323.8px;font-size:12px;letter-spacing:-0.26px">50 G/s</div>
<div class="t" style="left:21px;top:345.6px;font-size:12px;letter-spacing:-0.15px">Précision</div>
<div class="a" style="left:77px;top:347.5px;width:274px;height:5px;background:#4b9ff0;border-radius:2.5px"></div>
<div class="a" style="left:344px;top:344px;width:12px;height:12px;background:#4b9ff0;border-radius:50%;box-shadow:0 0 0 0.6px #7fb7ee"></div>
<div class="t" style="left:363px;top:345.6px;font-size:12px;letter-spacing:-0.8px">0.1%</div>
<div class="t" style="left:21px;top:371.5px;font-size:12px;letter-spacing:-0.95px">Tâche</div>
<div class="a" style="left:77px;top:365px;width:336px;height:24px;border:1px solid #d2d2d2;border-radius:3px;background:linear-gradient(#f9f9f9,#ededed)"></div>
<svg class="a" style="left:82px;top:369px" width="16" height="16" viewBox="0 0 16 16">
<rect x="0.5" y="1" width="15" height="14" rx="1" fill="#fbfbfb" stroke="#8a8a8a" stroke-width="0.9"/>
<path d="M11 2.8 H4 Q2 2.8 2 4.8 V11 Q2 13.2 4.2 13.2 H13.5" fill="none" stroke="#66b83a" stroke-width="1.5"/>
<path d="M11 5.5 H6 Q4.5 5.5 4.5 7 V9 Q4.5 10.6 6 10.6 H11 M11 8 H6.5" fill="none" stroke="#3d9c12" stroke-width="1.2"/>
<path d="M10.8 0.8 H15 V12.5 L12.9 14 L10.8 12.5 Z" fill="#cfcfcf" stroke="#777" stroke-width="0.8"/>
<path d="M10.8 4 L15 2.5 M10.8 6.5 L15 5 M10.8 9 L15 7.5 M10.8 11.5 L15 10" stroke="#444" stroke-width="0.9"/>
</svg>
<div class="t" style="left:104px;top:371.6px;font-size:12px;letter-spacing:-0.3px">Job</div>
<div class="dd" style="left:394.5px;top:375px;border-top-color:#909090"></div>
<div class="a" style="left:21px;top:395px;width:392px;height:192px;border:1px solid #c9c9c9;background:#efefef"></div>
<div class="a" style="left:25px;top:402px;width:13px;height:13px;border:1px solid #c6c6c6;border-radius:2px;background:#fff"></div>
<svg class="a" style="left:26px;top:403px" width="11" height="11" viewBox="0 0 11 11"><path d="M2 5.5 L4.5 9 L9 1.5" fill="none" stroke="#000" stroke-width="1.6"/></svg>
<svg class="a" style="left:46px;top:398px" width="23" height="23" viewBox="0 0 23 23">
<defs><linearGradient id="gpk" x1="0" y1="0" x2="0.4" y2="1"><stop offset="0" stop-color="#7aa8e0"/><stop offset="1" stop-color="#3f70b8"/></linearGradient></defs>
<rect x="0.5" y="1.5" width="21.5" height="20.5" fill="url(#gpk)" stroke="#1f3a60" stroke-width="1"/>
<path d="M10 6.5 L1.5 15.5 L13.5 17.5 M2.5 21 L9.5 13.5 M17.5 9.5 H22 M17.5 15 H22" fill="none" stroke="#6ee024" stroke-width="1.8"/>
<path d="M10.5 0.5 H17.5 V14 L14 17.5 L10.5 14 Z" fill="#d6d6d0" stroke="#555" stroke-width="0.9"/>
<path d="M10.5 4 L17.5 1.5 M10.5 7.5 L17.5 5 M10.5 11 L17.5 8.5 M10.5 14.5 L17.5 12" stroke="#333" stroke-width="0.9"/>
</svg>
<div class="t" style="left:75px;top:403.7px;font-size:12px;letter-spacing:-0.45px">Pocket_Shape</div>
<div class="t" style="left:21px;top:595.8px;font-size:12px;color:#f57c1f;letter-spacing:-0.056px">* Remarque : simulation volumétrique, les imprécisions sont inévitables.</div>

<!-- 3D view -->
<div class="a" id="view" style="left:439px;top:130px;width:840px;height:528px;background:#f7f7f7"></div>
<div class="a" style="left:1279px;top:31px;width:1px;height:689px;background:#8e8e8e"></div>


<svg class="a" style="left:439px;top:130px" width="839" height="528" viewBox="439 130 839 528">
<defs>
<linearGradient id="gwall" gradientUnits="userSpaceOnUse" x1="675" y1="0" x2="975" y2="0"><stop offset="0" stop-color="#8e8650"/><stop offset="0.5" stop-color="#aaa260"/><stop offset="1" stop-color="#cdb872"/></linearGradient>
<clipPath id="rim"><rect x="-96" y="-96" width="192" height="192" rx="30" transform="matrix(0.866,0.5,-0.866,0.5,824.6,372.3)"/></clipPath>
<clipPath id="cont"><rect x="-92" y="-92" width="184" height="184" rx="26" transform="matrix(0.866,0.5,-0.866,0.5,824.6,375.8)"/></clipPath>
</defs>
<polygon points="505,371.2 825,555.7 825,602.5 505,418.9" fill="#744242"/>
<polygon points="824.5,555.7 1144.6,371.5 1144.6,418.5 824.5,602.5" fill="#4f2f30"/><path d="M825 557 V602" stroke="#603939" stroke-width="0.6"/>
<polygon points="824.5,188 1144.6,372.5 825,556.7 505,372.2" fill="#7a4545"/>
<g>
<rect x="-96" y="-96" width="192" height="192" rx="30" transform="matrix(0.866,0.5,-0.866,0.5,824.6,372.3)" fill="url(#gwall)"/>
<g clip-path="url(#rim)">
<rect x="-96" y="-96" width="192" height="192" rx="30" transform="matrix(0.866,0.5,-0.866,0.5,824.6,376.3)" fill="#e8c46a"/>
</g>
<g clip-path="url(#cont)" stroke="#86aee6" stroke-width="1"><path d="M660 293.38 H990"/><path d="M660 297.34 H990"/><path d="M660 301.30 H990"/><path d="M660 305.26 H990"/><path d="M660 309.22 H990"/><path d="M660 313.18 H990"/><path d="M660 317.14 H990"/><path d="M660 321.10 H990"/><path d="M660 325.06 H990"/><path d="M660 329.02 H990"/><path d="M660 332.98 H990"/><path d="M660 336.94 H990"/><path d="M660 340.90 H990"/><path d="M660 344.86 H990"/><path d="M660 348.82 H990"/><path d="M660 352.78 H990"/><path d="M660 356.74 H990"/><path d="M660 360.70 H990"/><path d="M660 364.66 H990"/><path d="M660 368.62 H990"/><path d="M660 372.58 H990"/><path d="M660 376.54 H990"/><path d="M660 380.50 H990"/><path d="M660 384.46 H990"/><path d="M660 388.42 H990"/><path d="M660 392.38 H990"/><path d="M660 396.34 H990"/><path d="M660 400.30 H990"/><path d="M660 404.26 H990"/><path d="M660 408.22 H990"/><path d="M660 412.18 H990"/><path d="M660 416.14 H990"/><path d="M660 420.10 H990"/><path d="M660 424.06 H990"/><path d="M660 428.02 H990"/><path d="M660 431.98 H990"/><path d="M660 435.94 H990"/><path d="M660 439.90 H990"/><path d="M660 443.86 H990"/><path d="M660 447.82 H990"/><path d="M660 451.78 H990"/><path d="M660 455.74 H990"/><path d="M660 459.70 H990"/></g>
<g clip-path="url(#rim)"><rect x="-92" y="-92" width="184" height="184" rx="26" transform="matrix(0.866,0.5,-0.866,0.5,824.6,375.8)" fill="none" stroke="#7fb2f2" stroke-width="1"/></g>
<g clip-path="url(#rim)"><path d="M670 375.5 H980" stroke="#a8a27c" stroke-width="3"/><path d="M670 375.5 H980" stroke="#7f7a5a" stroke-width="1.2" stroke-dasharray="1.5 1.5"/></g>
<path d="M697 357.5 H953" stroke="#6fd02a" stroke-width="1"/>
</g>
<path d="M813 270 L825.5 458.5" stroke="#7aaef0" stroke-width="1.1"/>
<path d="M505.5 353.3 L825 436.5" stroke="#7aaef0" stroke-width="1.1"/>
<polygon points="765,350 765,361 808,358.6" fill="#2f2fd0"/>
<!-- origin axes -->
<path d="M505 372 V312" stroke="#2b2bd6" stroke-width="2.4"/>
<polygon points="505,303.5 501.5,314 508.5,314" fill="#2b2bd6"/>
<path d="M505 372 L557 342" stroke="#35c43a" stroke-width="2.4"/>
<polygon points="564.5,338 553,339.5 557.5,346.5" fill="#35c43a"/>
<path d="M505 372 L557 402.5" stroke="#d63a3a" stroke-width="2.4"/>
<polygon points="564.5,406.7 557.5,398.5 553,405.5" fill="#d63a3a"/>
<text x="501" y="300" font-family="Liberation Sans" font-size="11" fill="#2b2bd6">Z</text>
<text x="568.5" y="339" font-family="Liberation Sans" font-size="11" fill="#35c43a">Y</text>
<text x="568.5" y="416.5" font-family="Liberation Sans" font-size="11" fill="#d63a3a">X</text>
<!-- nav cube -->
<g fill="none" stroke="#5a5a5a" stroke-width="1">
<polygon points="1195.2,149.5 1219.1,149.5 1207,136.5"/>
<polygon points="1195.2,254.5 1219.1,254.5 1207,267"/>
<polygon points="1141.5,201.6 1154.3,190.3 1154.3,213.7"/>
<polygon points="1273,201.6 1259.4,190.3 1259.4,213.7"/>
<circle cx="1264.2" cy="144.6" r="6.6"/>
<path d="M1189.5 143.5 L1188 149.5 C1176 152 1169 158 1165.5 164.5 L1170 165.5 L1157.5 171 L1157 157.5 L1161 161 C1166 152 1176 145.5 1189.5 143.5 Z"/>
<path d="M1224.5 143.5 L1226 149.5 C1238 152 1245 158 1248.5 164.5 L1244 165.5 L1256.5 171 L1257 157.5 L1253 161 C1248 152 1238 145.5 1224.5 143.5 Z"/>
<path d="M1201.7 159.7 H1212.5 L1235.7 173.3 L1245.8 185.4 L1246.8 186.4 V218 L1241.2 225 L1217 241 L1213.5 243 H1201.4 L1197.5 241 L1171.8 225 L1167.6 218.7 V186 L1178.1 173.6 Z"/>
<path d="M1178.1 173.6 V179.2 L1201.7 192.4 H1212.5 L1235.7 179.4 V173.3 M1167.6 190.3 L1173.9 188.9 L1178.1 179.2 M1173.9 188.9 L1196.8 201.4 L1201.7 192.4 M1212.5 192.4 L1216.9 201.4 L1240.6 188.9 L1235.7 179.4 M1240.6 188.9 L1246.8 186.4 M1196.8 201.4 L1201.7 210.4 H1212.5 L1216.9 201.4 M1201.7 210.4 V237.5 H1212.5 V210.4 M1201.7 237.5 L1197.5 241 M1212.5 237.5 L1217 241"/>
<path d="M1241.9 244 L1252 239 L1262 244 V254 L1252 259 L1241.9 254 Z M1241.9 244 L1252 249 L1262 244 M1252 249 V259"/>
</g>
<g font-family="Liberation Sans" font-size="10" fill="#8a8a8a" text-anchor="middle">
<text transform="translate(1207,178) rotate(30)" font-style="italic">HAUT</text>
<text transform="translate(1184,217.5) rotate(30)">AVANT</text>
<text transform="translate(1232,216.5) rotate(-30)">DROITE</text>
</g>
<path d="M1158.3 188 V229.5" stroke="#7070e0" stroke-width="1.2"/>
<path d="M1158.3 229.5 L1194 209" stroke="#7ad87a" stroke-width="1.2"/>
<path d="M1158.3 229.5 L1194 251.5" stroke="#e07070" stroke-width="1.2"/>
<!-- mini axes -->
<path d="M1253 631.6 V620" stroke="#7f7fe8" stroke-width="1.8"/>
<polygon points="1253,615 1250.5,621.5 1255.5,621.5" fill="#3a3ad8"/>
<path d="M1253 631.6 L1261 627" stroke="#35c43a" stroke-width="1.2"/>
<polygon points="1264,625.5 1258,625.5 1260,629.5" fill="#35c43a"/>
<path d="M1253 631.6 L1263 637.5" stroke="#d63a3a" stroke-width="1.2"/>
<polygon points="1267.5,640.6 1261.5,635 1259.5,639" fill="#d63a3a"/>
<g font-family="Liberation Sans" font-size="8.5" font-weight="bold" fill="#111">
<text x="1253.3" y="613.2">Z</text><text x="1264.6" y="625.2">Y</text><text x="1268.3" y="640.2">X</text>
</g>
</svg>

<!-- tab bar / status -->
<div class="a" style="left:717px;top:658px;width:561px;height:1.5px;background:#c9c9c9"></div>
<div class="a" style="left:439px;top:658px;width:141px;height:29px;background:#dedede;border:1px solid #cbcbcb;border-top-color:#c4c4c4;border-radius:0 0 3px 3px"></div>
<svg class="a" style="left:444px;top:663px" width="16" height="17" viewBox="0 0 17 17">
<path d="M0.3 2.6 L2.6 0.3 H14 V16 H0.3 Z" fill="#dc3a42"/>
<path d="M0.3 2.6 L2.6 0.3 V16 H0.3 Z" fill="#f0646a"/>
<path d="M2.6 0.3 H14 L12 2.6 H2.6 Z" fill="#c8323a"/>
<path d="M14 2.4 V5 L13.2 5.6 L14 7 L13 8 L14 9.6 L12.6 10.4 L13 12 L11.2 12.4 L10.6 14 L9.2 14 L8.6 16 H3.8 L6 13 V5.3 H11 Z" fill="#3f8fe0"/>
<path d="M3.2 3.2 H11 V5.3 H5.6 V7 H8.2 V9.6 H5.6 V13 H3.2 Z" fill="#fff"/>
</svg>
<div class="t" style="left:470px;top:667.8px;font-size:12px;letter-spacing:-0.1px">Page d'accueil</div>
<svg class="a" style="left:558px;top:667px" width="13" height="12" viewBox="0 0 13 12"><path d="M1.5 1 L11.5 11 M11.5 1 L1.5 11" stroke="#7a7a7a" stroke-width="2"/></svg>
<div class="a" style="left:581px;top:658px;width:137px;height:30px;background:#f7f7f7;border:1px solid #cfcfcf;border-top:none;border-radius:0 0 4px 4px"></div>
<svg class="a" style="left:586px;top:663px" width="14" height="17" viewBox="0 0 14 17">
<path d="M1 1.5 H10 L13 4.5 V16 H1 Z" fill="#f4f4f4" stroke="#777" stroke-width="0.9"/>
<path d="M3.5 8.5 L7 6.5 L10.5 8.5 V12.5 L7 14.5 L3.5 12.5 Z" fill="#2f6fc0" stroke="#1a3d70" stroke-width="0.7"/>
<circle cx="9.2" cy="6.5" r="2.6" fill="#e03030"/>
</svg>
<div class="t" style="left:611px;top:666.7px;font-size:12px;font-weight:bold;letter-spacing:0.2px">tuto12-1 : 1*</div>
<svg class="a" style="left:696px;top:667px" width="13" height="12" viewBox="0 0 13 12"><path d="M1.5 1 L11.5 11 M11.5 1 L1.5 11" stroke="#7a7a7a" stroke-width="2"/></svg>

<!-- status bar -->
<div class="t" style="left:9px;top:698.3px;font-size:12px;letter-spacing:-0.242px">reselected: tuto12_1.Pocket_Shape.60 G1 F12 X24 Y33,559483 Z-1 (37.72 mm, 47.28 mm, -1.00 mm)</div>
<svg class="a" style="left:949px;top:698px" width="15" height="13" viewBox="0 0 15 13">
<rect x="0.5" y="0.5" width="14" height="12" fill="#e8c530" stroke="#b89a20" stroke-width="0.8"/>
<path d="M0.5 0.5 L7.5 7 L14.5 0.5" fill="none" stroke="#c9a520" stroke-width="0.8"/>
</svg>
<div class="t" style="left:969px;top:698.9px;font-size:12px">1</div>
<div class="dd" style="left:979.5px;top:702px;border-left-width:4px;border-right-width:4px;border-top:4.5px solid #666"></div>
<svg class="a" style="left:1004px;top:696px" width="17" height="17" viewBox="0 0 17 17">
<path d="M3.5 5.5 C5 2.5 10 2 13 4" fill="none" stroke="#666" stroke-width="1.6"/>
<path d="M13.5 11.5 C12 14.5 7 15 4 13" fill="none" stroke="#666" stroke-width="1.6"/>
<circle cx="13.6" cy="3.3" r="2.5" fill="#333"/><circle cx="4.5" cy="12.3" r="2.5" fill="#333"/>
</svg>
<div class="t" style="left:1023.5px;top:698.9px;font-size:12px;letter-spacing:-0.53px">Gesture</div>
<div class="dd" style="left:1083px;top:702px;border-left-width:4px;border-right-width:4px;border-top:4.5px solid #666"></div>
<div class="t" style="left:1110px;top:698.9px;font-size:12px;letter-spacing:-0.1px">178,39 mm x 112,13 mm</div>
<div class="dd" style="left:1249px;top:702px;border-left-width:4px;border-right-width:4px;border-top:4.5px solid #666"></div>
<svg class="a" style="left:1260px;top:700px" width="20" height="20" fill="#a8a8a8"><rect x="17" y="7" width="2" height="2"/><rect x="14" y="10" width="2" height="2"/><rect x="17" y="10" width="2" height="2"/><rect x="11" y="13" width="2" height="2"/><rect x="14" y="13" width="2" height="2"/><rect x="17" y="13" width="2" height="2"/><rect x="8" y="16" width="2" height="2"/><rect x="11" y="16" width="2" height="2"/><rect x="14" y="16" width="2" height="2"/><rect x="17" y="16" width="2" height="2"/></svg>
<div class="a" style="left:0;top:719px;width:1280px;height:1px;background:#6a6a6a"></div>

<!-- red annotations -->
<div class="a" style="left:4px;top:685px;width:542px;height:35px;border:5px solid #e60000"></div>
<svg class="a" style="left:0;top:0;pointer-events:none" width="1280" height="720" viewBox="0 0 1280 720">
<path d="M765.4 357.7 L766.4 364.1 L767.0 370.6 L767.3 377.0 L767.4 383.5 L767.1 389.9 L766.5 396.4 L765.7 402.8 L764.6 409.1 L763.2 415.5 L761.5 421.7 L759.6 427.8 L757.4 433.9 L755.0 439.8 L752.3 445.7 L749.4 451.3 L746.3 456.8 L742.9 462.2 L739.3 467.4 L735.4 472.3 L731.4 477.1 L727.1 481.7 L722.7 486.0 L718.0 490.0 L713.2 493.8 L708.2 497.3 L703.0 500.6 L697.6 503.5 L692.0 506.2 L686.3 508.6 L680.5 510.7 L674.6 512.6 L668.5 514.3 L662.3 515.8 L656.1 517.1 L649.8 518.3 L643.4 519.2 L637.0 520.1 L630.5 520.7 L624.0 521.3 L617.5 521.8 L611.1 522.1 L604.6 522.4 L598.1 522.6 L591.7 522.8 L585.3 522.9 L579.0 523.0 L572.6 523.0 L566.3 523.0 L560.0 523.0 L553.7 523.0 L547.4 523.1 L541.1 523.1 L534.8 523.1 L528.5 523.2 L522.2 523.3 L515.8 523.4 L509.4 523.6 L503.1 523.8 L496.7 524.2 L490.2 524.6 L483.8 525.1 L477.5 525.7 L471.1 526.4 L464.8 527.3 L458.5 528.3 L452.2 529.4 L446.0 530.7 L439.9 532.2 L433.9 533.9 L427.9 535.8 L422.0 537.9 L416.3 540.2 L410.6 542.8 L405.0 545.6 L399.6 548.7 L394.3 552.0 L389.2 555.6 L384.2 559.4 L379.3 563.5 L374.7 567.7 L370.3 572.2 L366.0 576.9 L362.0 581.8 L358.2 586.9 L354.6 592.2 L351.3 597.7 L348.3 603.3 L345.5 609.0 L342.9 614.9 L340.6 620.9 L338.6 627.0 L336.8 633.2 L335.2 639.4 L334.0 645.7 L333.0 652.0 L332.2 658.4 L331.8 664.7 L331.6 671.0 L331.7 677.4 L331.9 682.1" fill="none" stroke="#e60000" stroke-width="4.8" stroke-linejoin="round"/>
<path d="M323.5 670 L331.7 684 L339.7 670" fill="none" stroke="#e60000" stroke-width="4" stroke-linecap="round" stroke-linejoin="round"/>
</svg>
</body></html>
